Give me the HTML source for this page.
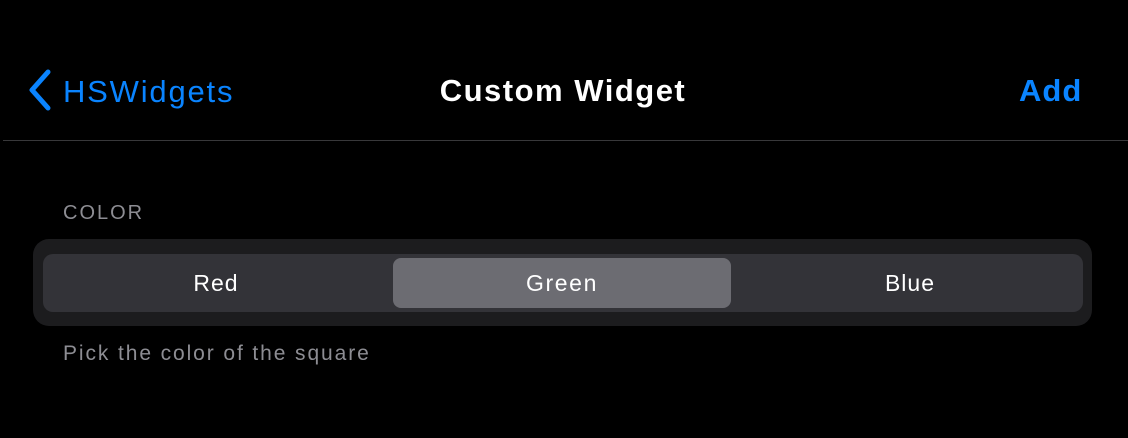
<!DOCTYPE html>
<html><head><style>
body{margin:0;width:1128px;height:438px;background:#000;font-family:"Liberation Sans",sans-serif;position:relative;overflow:hidden}
.a{position:absolute;white-space:nowrap}
</style></head><body>
<svg class="a" style="left:26px;top:68px" width="30" height="46" viewBox="0 0 30 46"><path d="M22 4 L6 22 L22 40" fill="none" stroke="#0a84ff" stroke-width="5" stroke-linecap="round" stroke-linejoin="round"/></svg>
<div class="a" style="left:63px;top:74px;font-size:31px;letter-spacing:1.8px;color:#0a84ff">HSWidgets</div>
<div class="a" style="left:0;width:1126px;text-align:center;top:73px;font-size:31px;letter-spacing:1.5px;font-weight:bold;color:#fff">Custom Widget</div>
<div class="a" style="left:1019px;top:73px;font-size:31px;letter-spacing:1px;font-weight:bold;color:#0a84ff">Add</div>
<div class="a" style="left:3px;top:140px;width:1125px;height:1px;background:#38383a"></div>
<div class="a" style="left:63px;top:202px;font-size:20px;letter-spacing:2px;color:#8d8d93">COLOR</div>
<div class="a" style="left:33px;top:239px;width:1059px;height:87px;border-radius:16px;background:#1c1c1e"></div>
<div class="a" style="left:43px;top:254px;width:1040px;height:58px;border-radius:10px;background:#333338"></div>
<div class="a" style="left:393px;top:258px;width:338px;height:50px;border-radius:8px;background:#6c6c72"></div>
<div class="a" style="left:43px;top:270px;width:346px;text-align:center;font-size:23px;letter-spacing:1px;color:#fff">Red</div>
<div class="a" style="left:393px;top:270px;width:338px;text-align:center;font-size:23px;letter-spacing:1.6px;color:#fff">Green</div>
<div class="a" style="left:737px;top:270px;width:346px;text-align:center;font-size:23px;letter-spacing:1px;color:#fff">Blue</div>
<div class="a" style="left:63px;top:342px;font-size:21px;letter-spacing:1.9px;color:#8d8d93">Pick the color of the square</div>
</body></html>
